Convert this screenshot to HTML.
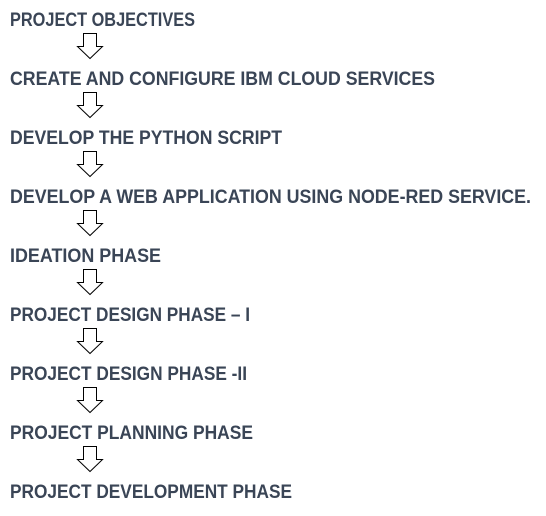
<html><body style="margin:0;background:#fff">
<svg width="546" height="516" xmlns="http://www.w3.org/2000/svg" style="display:block">
<defs><path id="a" d="M83.5 33.5H96.5V46.5H102.5L90 58.5L77.5 46.5H83.5Z" fill="#fff" stroke="#000" stroke-width="1"/></defs>
<g font-family="Liberation Sans, sans-serif" font-weight="bold" font-size="19.5" fill="#3a4556">
<text x="10" y="26" textLength="185" lengthAdjust="spacingAndGlyphs">PROJECT OBJECTIVES</text>
<text x="10" y="85" textLength="425" lengthAdjust="spacingAndGlyphs">CREATE AND CONFIGURE IBM CLOUD SERVICES</text>
<text x="10" y="144" textLength="272" lengthAdjust="spacingAndGlyphs">DEVELOP THE PYTHON SCRIPT</text>
<text x="10" y="203" textLength="521" lengthAdjust="spacingAndGlyphs">DEVELOP A WEB APPLICATION USING NODE-RED SERVICE.</text>
<text x="10" y="262" textLength="151" lengthAdjust="spacingAndGlyphs">IDEATION PHASE</text>
<text x="10" y="321" textLength="240" lengthAdjust="spacingAndGlyphs">PROJECT DESIGN PHASE – I</text>
<text x="10" y="380" textLength="237" lengthAdjust="spacingAndGlyphs">PROJECT DESIGN PHASE -II</text>
<text x="10" y="439" textLength="243" lengthAdjust="spacingAndGlyphs">PROJECT PLANNING PHASE</text>
<text x="10" y="498" textLength="282" lengthAdjust="spacingAndGlyphs">PROJECT DEVELOPMENT PHASE</text>
</g>
<use href="#a"/>
<use href="#a" y="59"/>
<use href="#a" y="118"/>
<use href="#a" y="177"/>
<use href="#a" y="236"/>
<use href="#a" y="295"/>
<use href="#a" y="354"/>
<use href="#a" y="413"/>
</svg>
</body></html>
